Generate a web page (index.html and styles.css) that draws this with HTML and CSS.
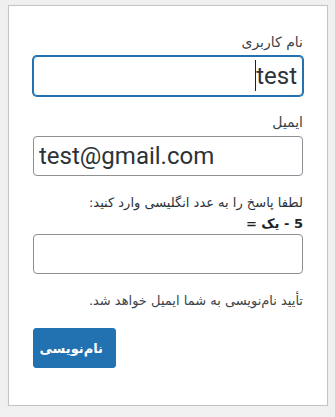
FILE: index.html
```html
<!DOCTYPE html>
<html lang="fa" dir="rtl">
<head>
<meta charset="utf-8">
<link rel="stylesheet" href="styles.css">
</head>
<body>
<form class="card">
  <label class="lbl" for="user_login">نام کاربری</label>
  <div class="field focus-wrap">
    <input class="input focused" id="user_login" type="text" value="test">
    <span class="caret"></span>
  </div>
  <label class="lbl" for="user_email">ایمیل</label>
  <div class="field">
    <input class="input ltr" id="user_email" type="email" value="test@gmail.com">
  </div>
  <label class="captcha" for="cap">لطفا پاسخ را به عدد انگلیسی وارد کنید:<br><b>5 - یک =</b></label>
  <div class="field">
    <input class="input" id="cap" type="text" value="">
  </div>
  <p class="note">تأیید نام‌نویسی به شما ایمیل خواهد شد.</p>
  <div class="actions">
    <button type="button" class="btn">نام‌نویسی</button>
  </div>
</form>
</body>
</html>
```
FILE: styles.css
```css
* { box-sizing: border-box; }
html, body { margin: 0; }
body {
  background: #f0f0f1;
  padding: 5px 0 0 8px;
  direction: ltr;
  font-family: "DejaVu Sans", sans-serif;
}
.card {
  direction: rtl;
  width: 320px;
  background: #fff;
  border: 1px solid #c3c4c7;
  box-shadow: 0 1px 3px rgba(0,0,0,.04);
  padding: 26px 24px 37px;
  display: flex;
  flex-direction: column;
  align-items: stretch;
  font-size: 13px;
  color: #3c434a;
}
.lbl {
  font-size: 14px;
  line-height: 21px;
  height: 21px;
  margin-bottom: 3px;
  color: #3c434a;
}
.field {
  position: relative;
  margin-bottom: 16px;
}
.captcha {
  font-size: 13px;
  line-height: 21px;
  color: #2c3338;
}
.captcha b { font-weight: 700; color: #1d2327; }
.input {
  display: block;
  width: 100%;
  height: 40px;
  margin: 0;
  font-family: Roboto, "Liberation Sans", sans-serif;
  font-size: 24px;
  line-height: 32px;
  padding: 3px 5px;
  border: 1px solid #8c8f94;
  border-radius: 4px;
  color: #2c3338;
  background: #fff;
  outline: none;
}
.input.focused {
  border-color: #2271b1;
  box-shadow: 0 0 0 1px #2271b1;
}
.input.ltr { direction: ltr; text-align: left; }
.caret {
  position: absolute;
  right: 47px;
  top: 4px;
  width: 1px;
  height: 31px;
  background: #1d2327;
}
.note {
  margin: 0;
  font-size: 13px;
  line-height: 21px;
  color: #3c434a;
}
.actions {
  margin-top: 17px;
  display: flex;
  justify-content: flex-end;
}
.btn {
  font-family: "DejaVu Sans", sans-serif;
  width: 83px;
  height: 40px;
  background: #2271b1;
  border: 1px solid #2271b1;
  border-radius: 3px;
  color: #fff;
  font-size: 13px;
  font-weight: 600;
  padding: 0 12px;
}
```
